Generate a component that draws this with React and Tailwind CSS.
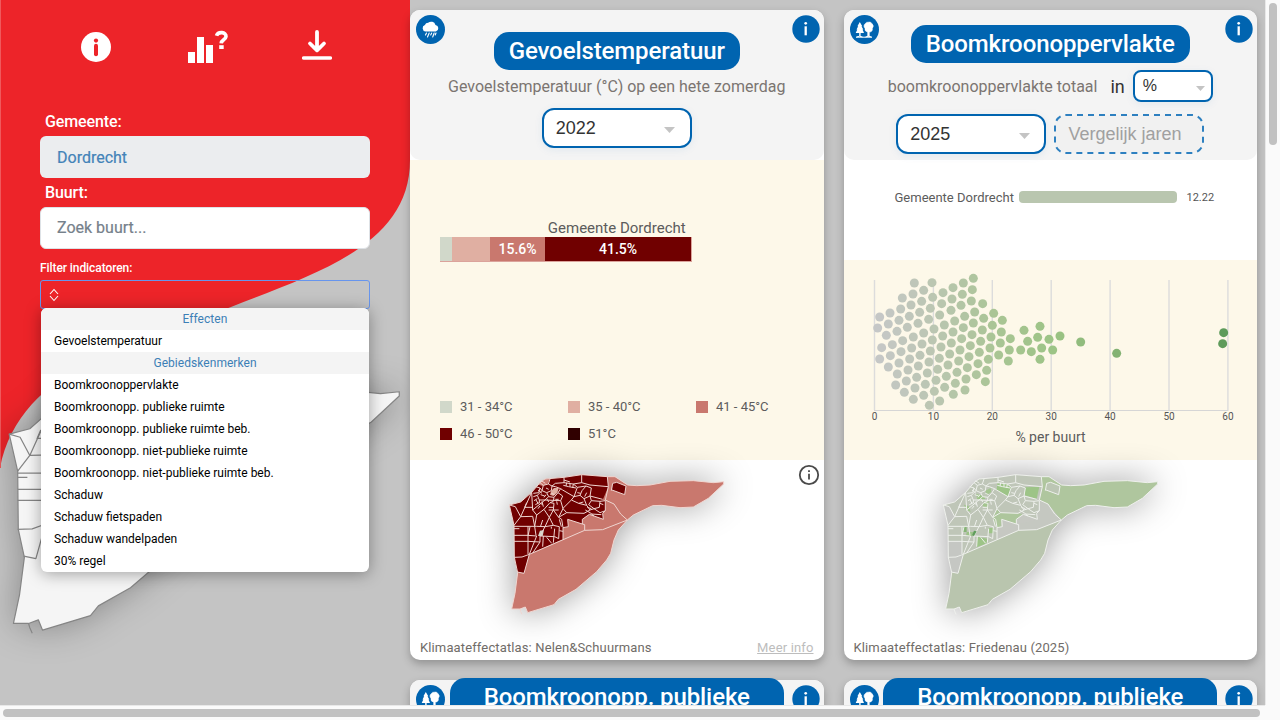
import React from "react";

const OUTLINE =
  "M58 135L92 126L125 97L150 68L165 57L222 52L275 44L352 50L375 50L413 75L440 77L480 75L540 64L610 62L670 68L701 65L701 72L655 115L610 141L570 143L515 136L488 137L430 165L412 180L385 210L372 240L362 280L350 300L320 335L258 388L205 418L192 434L113 458L106 441L90 447L65 447L75 400L83 338L73 292L72 196Z";
const URBAN =
  "M58 135L92 126L125 97L150 68L165 57L222 52L275 44L352 50L355 80L338 120L348 124L346 152L338 160L340 178L298 163L277 178L277 192L233 178L235 200L219 203L219 238L118 283L102 340L82 336L73 292L72 196Z";
const POLDER =
  "M118 283L284 211L338 209L412 180L385 210L372 240L362 280L350 300L320 335L258 388L205 418L192 434L113 458L106 441L90 447L65 447L75 400L83 338L102 340Z";
const EAST =
  "M352 50L375 50L413 75L440 77L480 75L540 64L610 62L670 68L701 65L701 72L655 115L610 141L570 143L515 136L488 137L430 165L412 180L392 162L372 132L346 120L355 80Z";
const STREETS = [
  "M82 336L102 340L118 283L284 211L338 209L412 180L392 162L372 132L346 120L355 80L352 50",
  "M219 238V203L235 200L233 178L277 192L284 194V211M277 192V178L298 163L340 178L338 160L346 152V122",
  "M58 135L76 140L92 170L72 196M92 170L125 97M92 170L128 169M125 97L128 150",
  "M72 199H140L165 200M128 169L134 199",
  "M72 226H114L140 228M72 244H114L150 246M72 292L96 291L118 283M114 199V282M120 200L114 228M140 228L118 283M150 246L128 279",
  "M128 150L165 120L212 122L219 146L206 172L215 178L219 203M128 150L140 165L134 199M140 165L162 148L180 128L192 130L190 150L206 172",
  "M162 148L178 172L165 200L190 196L208 200L206 236M178 172L190 150M178 172L190 196M165 200L150 228L150 246M150 228L194 230L206 236M194 206L190 248M160 228L158 260M170 232L185 250M208 212L219 214",
  "M137 80L150 84L146 98L130 100M150 68L160 76L175 72L180 57M160 76L156 92L150 84M156 92L170 98L184 92L186 78L175 72M186 78L196 70L222 68L222 52",
  "M130 110L142 106L156 92M142 106L148 120L165 120M170 98L176 110L165 120M176 110L192 112L204 98L212 86L196 80L186 78M192 112L190 124L180 128M204 98L218 108L212 122",
  "M136 134L148 128L158 134M148 120L148 128M144 146L150 138M132 122L142 116M152 104L164 108M168 84L176 88M196 118L206 118",
  "M144 90L156 100M154 62L166 70M162 112L168 104M184 100L194 104M138 120L144 130M156 124L160 140M172 118L176 126M200 124L202 134",
  "M222 68L250 72L275 68L275 44M275 68L300 75L355 80M250 72L262 82L288 78L304 84L300 108L338 118M262 82L252 110L218 90L212 86M252 110L244 120L218 146",
  "M219 146L230 158L282 160L300 150M230 158L206 172M244 120L266 130L290 136L300 150L312 146L330 158L346 152M252 110L270 106L282 116L290 136",
  "M270 106L276 92L288 78M282 116L300 108L304 122L330 124L346 122M304 122L296 134L312 146M330 124L328 142L312 146M266 130L280 126M262 98L272 100M290 98L284 110",
  "M222 60L240 66M230 68L228 78M240 70L240 80M250 72L248 84M220 76L236 80L258 84M286 150L300 158L312 168M304 162L334 164M292 142L304 146M330 130L340 134",
  "M364 92L368 70L380 67L408 78L404 104L366 90M110 128L104 142L128 142M134 200L138 226M72 206H88M184 200V206M208 178L214 200M158 180L152 198M176 150L206 150M176 142L190 142",
  "M90 447L92 454L96 463",
];
const ISLAND = "M368 70L380 67L408 78L404 104L366 90Z";

function RegionMap({ className, variant }) {
  const heat = variant === "heat";
  const green = variant === "green";
  const line = heat ? "#efd5d0" : green ? "#eef0ec" : "#858585";
  return (
    <svg viewBox="0 0 750 510" className={className} fill="none">
      <path d={OUTLINE} fill={heat ? "#c9786e" : green ? "#c6c8c2" : "#f5f5f5"} />
      {heat && (
        <g>
          <path d={URBAN} fill="#700000" />
          <path d={ISLAND} fill="#700000" />
          <path d="M150 68L165 57L180 57L172 72L158 78L146 74Z" fill="#c9786e" />
          <path d="M184 92L192 84L206 84L202 98L190 108L180 104Z" fill="#e0afa2" />
          <path d="M150 212L162 210L158 228L144 228Z" fill="#d1d8ca" />
        </g>
      )}
      {green && (
        <g>
          <path d={URBAN} fill="#bfc6b8" />
          <path d={POLDER} fill="#b9c5ae" />
          <path d={EAST} fill="#afc69e" />
          <path d={ISLAND} fill="#bcc6b4" />
          <path d="M58 135L76 140L92 170L72 196Z M73 244H114V282L96 291H73Z M73 292L96 291L118 283L102 340L82 336Z" fill="#c5c7c3" />
          <path d="M284 192L340 178L346 122L372 132L412 180L338 209L284 211Z" fill="#c5c8c1" />
          <path d="M220 70L250 72L262 84L252 110L218 90Z M304 82L346 80L338 116L302 106Z M160 230L190 236L188 250L158 262Z M194 204H208V220H194Z M156 102L180 108L184 118L160 118Z" fill="#9dc487" />
          <path d="M206 172L219 146L230 158L282 160L296 163L277 178V192L233 178L230 200L219 203Z" fill="#adc69c" />
          <path d="M178 128L194 122L192 146L176 138Z M120 134L134 138L140 156L126 150Z M184 92L200 84L202 96L188 106Z" fill="#a3c58f" />
          <path d="M116 200H128V216H116Z" fill="#86b476" />
          <path d="M128 216H148L144 228H126Z" fill="#9cc388" />
        </g>
      )}
      <g stroke={line} strokeWidth={variant === "plain" ? 2 : 3} strokeLinejoin="round">
        <path d={OUTLINE} />
        {STREETS.map((d) => (
          <path key={d} d={d} />
        ))}
      </g>
      {green && <path d="M150 212L158 214L150 228L144 226Z" fill="#5f9c5b" />}
    </svg>
  );
}

const DOTS = [
  [59,171],[53,204],[90,159],[85,192],[79,226],[65,263],[59,297],[127,114],[122,147],[117,181],[111,214],[97,254],[91,287],[85,321],
  [163,69],[159,102],[153,135],[148,169],[142,202],[128,242],[123,275],[117,309],[112,342],[107,375],[191,91],[185,124],[179,157],[174,190],
  [160,231],[155,264],[149,297],[144,330],[139,363],[133,397],[216,68],[218,112],[211,145],[206,178],[191,219],[186,252],[180,286],[175,318],
  [170,352],[165,384],[160,418],[249,98],[245,131],[239,165],[222,207],[217,240],[211,273],[207,306],[202,339],[196,373],[191,406],[208,436],
  [279,83],[276,117],[273,151],[253,195],[248,228],[243,261],[238,295],[233,328],[228,361],[223,394],[239,423],[310,69],[307,103],[303,136],
  [284,183],[279,216],[274,249],[269,282],[264,315],[259,349],[254,382],[340,55],[337,89],[334,123],[314,169],[310,203],[305,236],[300,270],
  [296,303],[291,337],[286,370],[280,403],[368,131],[344,156],[340,189],[336,224],[331,257],[327,290],[322,323],[318,357],[315,390],[401,160],
  [371,175],[367,210],[362,244],[358,277],[354,311],[349,344],[427,181],[397,196],[393,231],[390,264],[385,298],[380,331],[376,365],[424,216],
  [421,249],[416,285],[451,236],[448,270],[445,303],[492,211],[482,270],[503,244],[514,275],[540,199],[533,232],[545,264],[540,298],[567,238],
  [578,270],[600,228],[662,246],[770,280],[1091,218],[1088,251],
];

function dotColor(x) {
  const v = Math.max(0, (x - 43) / 17.67);
  const stops = [[0, 198, 199, 200], [10, 187, 198, 178], [20, 170, 197, 150], [30, 157, 196, 134], [41, 131, 178, 115], [60, 92, 154, 90]];
  const i = Math.min(stops.length - 2, stops.filter((s) => s[0] <= v).length - 1);
  const a = stops[i];
  const b = stops[i + 1];
  const t = Math.min(1, (v - a[0]) / (b[0] - a[0]));
  return `rgb(${[1, 2, 3].map((k) => Math.round(a[k] + (b[k] - a[k]) * t)).join(",")})`;
}

function Swarm() {
  return (
    <svg width="413" height="200" className="block">
      {[0, 10, 20, 30, 40, 50, 60].map((n) => {
        const x = 30.5 + n * 5.89;
        return (
          <g key={n}>
            <path d={`M${x} 20V150`} stroke="#dcdcdc" strokeWidth="1.4" />
            <text x={x} y="160" textAnchor="middle" fontSize="10" fill="#555" fontFamily="Roboto, sans-serif">{n}</text>
          </g>
        );
      })}
      <path d="M30 150.5H384.5" stroke="#d6d6d6" />
      {DOTS.map(([x, y]) => (
        <circle key={`${x}-${y}`} cx={x / 3 + 16} cy={y / 3} r="4.5" fill={dotColor(x)} />
      ))}
      <text x="206.500" y="182" textAnchor="middle" fontSize="14" fill="#5c5c5c" fontFamily="Roboto, sans-serif">% per buurt</text>
    </svg>
  );
}

function RainBadge() {
  return (
    <svg viewBox="0 0 29 29" className="block h-[29px] w-[29px]">
      <circle cx="14.500" cy="14.500" r="14.500" fill="#0064b0" />
      <path d="M9.500 16.500a3.300 3.300 0 0 1-.6-6.400 3.400 3.400 0 0 1 3.200-2.300 4.600 4.600 0 0 1 7.400 2.100 3.400 3.400 0 0 1 .4 6.600Z" fill="#fff" />
      <path d="M10.500 18l-1 2M13.200 18l-1.700 4M15.700 18l-1 2M18.200 18l-1.500 4M20 18l-.8 2" stroke="#fff" strokeWidth="1.100" strokeLinecap="round" />
    </svg>
  );
}

function TreeBadge() {
  return (
    <svg viewBox="0 0 29 29" className="block h-[29px] w-[29px]">
      <circle cx="14.500" cy="14.500" r="14.500" fill="#0064b0" />
      <path d="M9.800 7L12.300 11.300H11.500L13.300 14.600H12.500L14 18H10.600V21.300H9.200V18H5.700L7.300 14.600H6.500L8.200 11.300H7.400Z" fill="#fff" />
      <path d="M18.300 7.200a3 3 0 0 1 3.700 1.500 3.300 3.300 0 0 1 .3 4.600 3.300 3.300 0 0 1-3 3.800V21.300H17.700V17a3.200 3.200 0 0 1-2.700-3.700 3 3 0 0 1 .2-4.600 3 3 0 0 1 3.100-1.500Z" fill="#fff" stroke="#fff" strokeWidth=".6" />
      <path d="M6.500 22q3-1.600 6 0M15.500 22q3-1.600 6 0M6 22.200H22" stroke="#fff" strokeWidth="1" fill="none" />
    </svg>
  );
}

function InfoBadge() {
  return (
    <svg viewBox="0 0 28 28" className="block h-7 w-7">
      <circle cx="14" cy="14" r="13.700" fill="#0064b0" />
      <circle cx="13.700" cy="8.300" r="1.350" fill="#fff" />
      <path d="M13.700 11.300V20.300" stroke="#fff" strokeWidth="2.300" />
    </svg>
  );
}

function Select({ value, className, small }) {
  return (
    <div className={`flex items-center justify-between border-2 border-[#0064b0] bg-white font-['Liberation_Sans',sans-serif] text-[#333] shadow-[0_2px_8px_rgba(0,100,176,0.08)] ${className}`}>
      <span>{value}</span>
      <svg viewBox="0 0 11 6" className={small ? "mt-[4px] block h-[5px] w-[9px]" : "mt-[4px] block h-[6px] w-[11px]"}>
        <path d="M0 0H11L5.500 6Z" fill="#c4c4c4" />
      </svg>
    </div>
  );
}

function Pill({ children, className }) {
  return (
    <h2 className={`rounded-[15px] bg-[#0064b0] px-[15px] text-center text-[24px] leading-[38px] font-medium tracking-[-0.1px] whitespace-nowrap text-white ${className || ""}`}>
      {children}
    </h2>
  );
}

function Card({ badge, header, children }) {
  return (
    <article className="relative h-[650px] min-w-0 rounded-[10px] bg-white shadow-[0_4px_8px_rgba(0,0,0,0.25)]">
      <header className="flex h-[150px] flex-col items-center rounded-[10px] bg-[#f4f4f4]">{header}</header>
      <div className="absolute top-[5px] left-[6px]">{badge}</div>
      <div className="absolute top-[5px] right-[4px]">
        <InfoBadge />
      </div>
      {children}
    </article>
  );
}

const SEGMENTS = [
  ["w-[12px] bg-[#d1d8ca]", ""],
  ["w-[38px] bg-[#e0afa2]", ""],
  ["w-[55px] bg-[#c9786e]", "15.6%"],
  ["w-[146px] bg-[#700000]", "41.5%"],
];
const LEGEND = [
  ["bg-[#d1d8ca]", "31 - 34°C"],
  ["bg-[#e0afa2]", "35 - 40°C"],
  ["bg-[#c9786e]", "41 - 45°C"],
  ["bg-[#700000]", "46 - 50°C"],
  ["bg-[#300000]", "51°C"],
];

function TemperatureCard() {
  return (
    <Card
      badge={<RainBadge />}
      header={
        <>
          <Pill className="mt-[22px]">Gevoelstemperatuur</Pill>
          <p className="mt-[5px] h-[24px] text-[16px] leading-[24px] whitespace-nowrap text-[#7b7571]">
            Gevoelstemperatuur (°C) op een hete zomerdag
          </p>
          <Select value="2022" className="mt-[9px] h-10 w-[150px] rounded-[12px] pr-[15px] pl-3 text-[18px]" />
        </>
      }
    >
      <section className="h-[300px] bg-[#fdf8e9] px-[30px] pt-[58px]">
        <p className="h-[19px] text-center text-[15px] leading-[20px] text-[#5c5c5c]">Gemeente Dordrecht</p>
        <div className="flex h-[25px] w-[252px] border-r border-b border-[#dba39b]">
          {SEGMENTS.map(([c, label]) => (
            <div key={c} className={`text-center text-[14px] leading-[24px] font-medium tracking-[-0.05px] text-white ${c}`}>{label}</div>
          ))}
        </div>
        <ul className="mt-[131px] grid grid-cols-[128px_128px_128px]">
          {LEGEND.map(([c, label]) => (
            <li key={label} className="flex h-[27px] items-center gap-2 text-[13px] text-[#5c5c5c]">
              <span className={`h-3 w-3 ${c}`} />
              {label}
            </li>
          ))}
        </ul>
      </section>
      <section className="relative flex h-[197px] flex-col justify-between">
        <svg viewBox="0 0 22 22" className="mt-1 mr-[4px] block h-[22px] w-[22px] self-end" fill="none" stroke="#4a4a4a" strokeWidth="1.800">
          <circle cx="11" cy="11" r="9.200" />
          <path d="M11 9.700V15.500M11 6.300V8" />
        </svg>
        <RegionMap variant="heat" className="absolute top-0 left-[80px] h-[170px] w-[250px] overflow-visible drop-shadow-[0_0_17px_rgba(0,0,0,0.38)]" />
        <p className="relative flex justify-between pr-[10px] pl-[10px] text-[13px] leading-[18px] text-[#706c68]">
          <span className="tracking-[0.13px]">Klimaateffectatlas: Nelen&amp;Schuurmans</span>
          <a className="tracking-[0.15px] text-[#bdbdbd] underline">Meer info</a>
        </p>
      </section>
    </Card>
  );
}

function CanopyCard() {
  return (
    <Card
      badge={<TreeBadge />}
      header={
        <>
          <Pill className="mt-[15px]">Boomkroonoppervlakte</Pill>
          <div className="mt-[7px] flex h-8 items-center">
            <p className="pt-px text-[16px] whitespace-nowrap text-[#7b7571]">boomkroonoppervlakte totaal</p>
            <span className="ml-[13px] text-[18px] text-[#333]">in</span>
            <Select small value="%" className="ml-2 h-8 w-20 rounded-[8px] pr-[6px] pl-2 text-[16px]" />
          </div>
          <div className="mt-3 flex gap-2">
            <Select value="2025" className="h-10 w-[150px] rounded-[12px] pr-[14px] pl-3 text-[18px]" />
            <svg width="150" height="40" className="block">
              <rect x="1" y="1" width="148" height="38" rx="11" fill="#f1f1f1" stroke="#2e80c0" strokeWidth="2" strokeDasharray="6 5" />
              <text x="14.500" y="26" fontSize="18" fill="#a0a0a0" fontFamily="Liberation Sans, sans-serif">Vergelijk jaren</text>
            </svg>
          </div>
        </>
      }
    >
      <section className="flex h-[100px] items-start pt-[28px] pl-[51px]">
        <span className="w-[124px] text-[13px] leading-[20px] whitespace-nowrap text-[#5c5c5c]">Gemeente Dordrecht</span>
        <span className="mt-[3px] h-[12px] w-[158px] rounded-[4px] bg-[#b9c6af]" />
        <span className="ml-[10px] text-[11px] leading-[19px] text-[#555]">12.22</span>
      </section>
      <section className="h-[200px] bg-[#fdf8e9]">
        <Swarm />
      </section>
      <section className="relative flex h-[197px] flex-col justify-end">
        <RegionMap variant="green" className="absolute top-0 left-[80px] h-[170px] w-[250px] overflow-visible drop-shadow-[0_0_17px_rgba(0,0,0,0.38)]" />
        <p className="relative pl-[10px] text-[13px] leading-[18px] tracking-[0.13px] text-[#706c68]">Klimaateffectatlas: Friedenau (2025)</p>
      </section>
    </Card>
  );
}

function NextCard() {
  return <Card badge={<TreeBadge />} header={<Pill className="mt-[-2px] h-[76px] w-[334px]">Boomkroonopp. publieke</Pill>} />;
}

const OPTIONS = [
  ["Effecten", true],
  ["Gevoelstemperatuur"],
  ["Gebiedskenmerken", true],
  ["Boomkroonoppervlakte"],
  ["Boomkroonopp. publieke ruimte"],
  ["Boomkroonopp. publieke ruimte beb."],
  ["Boomkroonopp. niet-publieke ruimte"],
  ["Boomkroonopp. niet-publieke ruimte beb."],
  ["Schaduw"],
  ["Schaduw fietspaden"],
  ["Schaduw wandelpaden"],
  ["30% regel"],
];

function Sidebar() {
  return (
    <aside className="relative h-[705px] w-[410px] shrink-0 overflow-hidden">
      <svg viewBox="0 0 410 705" className="absolute inset-0 h-full w-full">
        <path d="M0 0H410V160C410 244 320 272 231 307C140 341 20 366 0 468Z" fill="#ed2429" />
        <path d="M.5 0V468" stroke="#f0595c" />
      </svg>
      <RegionMap variant="plain" className="absolute top-[352px] left-[-26px] h-[310px] w-[455px] overflow-visible drop-shadow-[0_0_17px_rgba(0,0,0,0.3)]" />
      <div className="relative flex flex-col px-10">
        <nav className="flex h-[94px] items-start justify-between pr-[38px] pl-[41px]">
          <svg viewBox="0 0 30 30" className="mt-8 block h-[30px] w-[30px]">
            <circle cx="15" cy="15" r="15" fill="#fff" />
            <circle cx="15" cy="8.600" r="2.100" fill="#ed2429" />
            <path d="M15 13.700V22.300" stroke="#ed2429" strokeWidth="4" strokeLinecap="round" />
          </svg>
          <svg viewBox="0 0 42 34" className="mt-[30px] ml-[2px] block h-[34px] w-[42px]">
            <path d="M1 22H8V33H1ZM10 7H17V33H10ZM19 15H26V33H19Z" fill="#fff" />
            <path d="M29.500 5.800C31 1.200 39.500 1.800 39 6.500C38.600 10 34.500 9.500 34.200 13.300" fill="none" stroke="#fff" strokeWidth="3.600" />
            <path d="M32.200 15.200H36.700V19H32.200Z" fill="#fff" />
          </svg>
          <svg viewBox="0 0 30 32" className="mt-[29px] block h-8 w-[30px]" fill="none" stroke="#fff" strokeLinecap="round" strokeLinejoin="round">
            <path d="M15 3V20M8 14.500L15 21.300L22 14.500" strokeWidth="3.800" />
            <path d="M1.700 29H28.300" strokeWidth="3.600" />
          </svg>
        </nav>
        <label className="mt-[16px] pl-[5px] text-[16px] leading-6 font-medium tracking-[-0.1px] text-white">Gemeente:</label>
        <div className="mt-[2px] h-[42px] rounded-[6px] bg-[#ebedef] pl-[17px] text-[16px] leading-[43px] text-[#4383b8] [-webkit-text-stroke:0.2px_#4383b8]">Dordrecht</div>
        <label className="mt-[3px] pl-[5px] text-[16px] leading-6 font-medium tracking-[-0.1px] text-white">Buurt:</label>
        <div className="mt-[2px] h-[42px] rounded-[6px] border border-[#dee2e6] bg-white pl-4 text-[16px] leading-10 text-[#76818b] [-webkit-text-stroke:0.2px_#76818b]">Zoek buurt...</div>
        <label className="mt-[10px] text-[12px] leading-[18px] font-medium tracking-[-0.08px] text-white">Filter indicatoren:</label>
        <div className="mt-[3px] flex h-[29px] items-center rounded-[3px] border border-[#6795ed] pl-2">
          <svg viewBox="0 0 10 14" className="block h-[14px] w-[10px]" fill="none" stroke="#fff" strokeWidth="1.100">
            <path d="M1 6L5 1.500L9 6M1 8L5 12.500L9 8" />
          </svg>
        </div>
        <ul className="mx-px mt-[-1px] overflow-hidden rounded-[6px] bg-white shadow-[0_2px_16px_rgba(0,0,0,0.35)]">
          {OPTIONS.map(([label, group]) => (
            <li key={label} className={group ? "h-[22px] bg-[#f4f4f4] text-center text-[12px] leading-[22px] tracking-[0.05px] text-[#3c7fb6]" : "h-[22px] pl-[13px] text-[12px] leading-[22px] text-black"}>
              {label}
            </li>
          ))}
        </ul>
      </div>
    </aside>
  );
}

export default function App() {
  return (
    <div className="grid h-[720px] w-[1280px] grid-cols-[1265px_15px] grid-rows-[705px_15px] overflow-hidden bg-[#fafafa] font-[Roboto,sans-serif]">
      <div className="flex overflow-hidden bg-[#c4c4c4]">
        <Sidebar />
        <main className="grid h-[1330px] w-[847px] grid-cols-2 content-start gap-5 pt-[10px]">
          <TemperatureCard />
          <CanopyCard />
          <NextCard />
          <NextCard />
        </main>
      </div>
      <div className="border-l border-[#e8e8e8] pt-[3px] pl-[3px]">
        <div className="h-[142px] w-2 rounded-full bg-[#c1c1c1]" />
      </div>
      <div className="border-t border-[#e8e8e8] pt-[3px] pl-[3px]">
        <div className="h-2 w-[1257px] rounded-full bg-[#c1c1c1]" />
      </div>
      <div />
    </div>
  );
}
